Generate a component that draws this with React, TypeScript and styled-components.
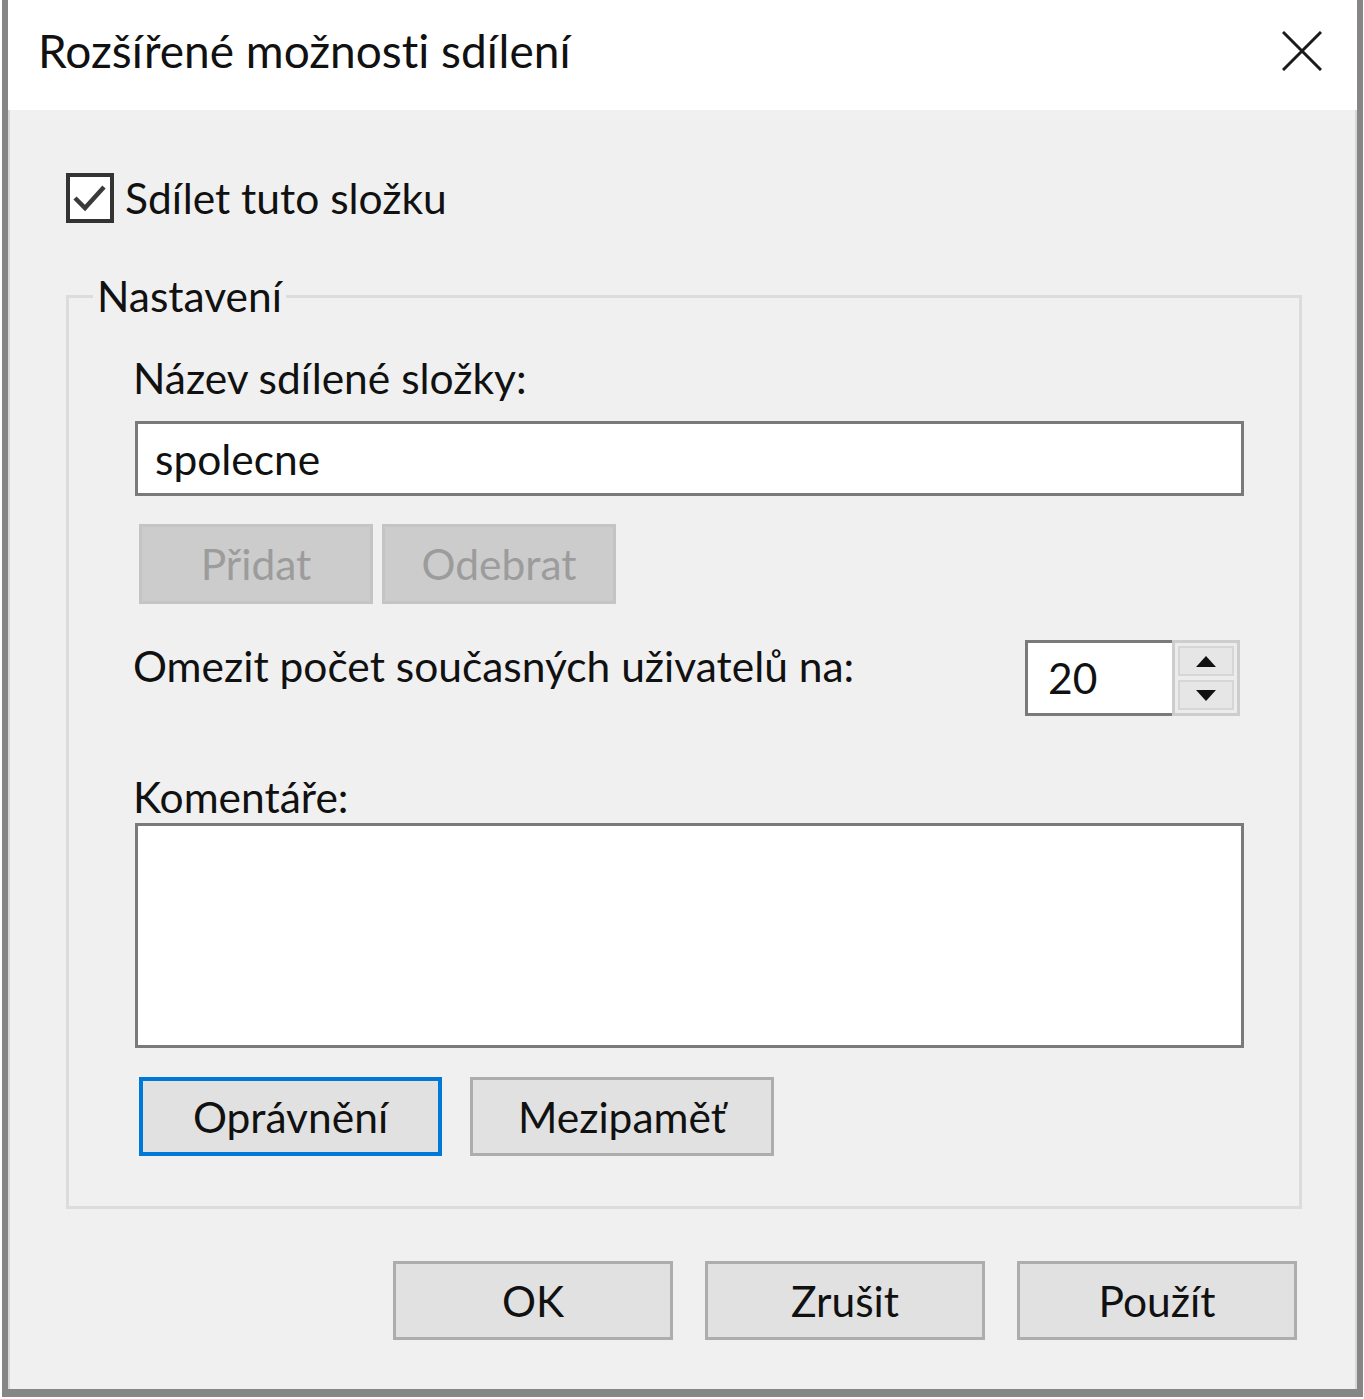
import React from "react";
import styled, { createGlobalStyle } from "styled-components";

const Global = createGlobalStyle`
  html, body { margin: 0; padding: 0; background: #ffffff; }
  body { font-family: Lato, "Noto Sans", sans-serif; color: #111; font-variant-ligatures: none; }
  * { box-sizing: border-box; }
`;

const FONT = `font-family: Lato, "Noto Sans", sans-serif; font-size: 42.5px; line-height: 52px; font-variant-ligatures: none;`;

const Window = styled.div`
  width: 1361px;
  height: 1397px;
  margin-left: 2px;
  border: 6px solid #868686;
  border-top: none;
  border-bottom-width: 8px;
  background: #f0f0f0;
  display: flex;
  flex-direction: column;
  box-shadow: inset 2px 0 0 #d8d8d8, inset -2px 0 0 #d8d8d8;
`;

const TitleBar = styled.div`
  height: 110px;
  flex: none;
  background: #ffffff;
  display: flex;
  align-items: center;
  justify-content: space-between;
  padding: 0 35px 8px 30px;
`;

const Title = styled.div`
  ${FONT}
  font-size: 46px;
  color: #111;
`;

const CloseButton = styled.button`
  width: 40px;
  height: 40px;
  padding: 0;
  border: none;
  background: transparent;
  display: flex;
`;

const Body = styled.div`
  flex: 1;
  display: flex;
  flex-direction: column;
  padding: 0 55px 0 58px;
`;

const CheckRow = styled.label`
  margin-top: 63px;
  height: 50px;
  display: flex;
  align-items: center;
  gap: 11px;
  ${FONT}
`;

const CheckBox = styled.span`
  width: 48px;
  height: 50px;
  border: 4px solid #333;
  background: #fff;
  display: flex;
  align-items: center;
  justify-content: center;
`;

const Group = styled.fieldset`
  margin: 47px 0 0 0;
  padding: 0;
  border: 3px solid #dcdcdc;
  min-width: 0;
`;

const Legend = styled.legend`
  ${FONT}
  margin-left: 24px;
  padding: 0 4px;
`;

const GroupContent = styled.div`
  display: flex;
  flex-direction: column;
  padding: 30px 55px 50px 64px;
`;

const Label = styled.div<{ $top?: number }>`
  ${FONT}
  margin-top: ${(p) => p.$top ?? 0}px;
  white-space: nowrap;
`;

const TextField = styled.div<{ $top?: number; $height: number }>`
  margin: ${(p) => p.$top ?? 0}px 0 0 2px;
  height: ${(p) => p.$height}px;
  border: 3px solid #7a7a7a;
  background: #fff;
  ${FONT}
  display: flex;
  align-items: ${(p) => (p.$height > 100 ? "flex-start" : "center")};
  padding-left: 17px;
`;

const ButtonRow = styled.div<{ $top: number; $gap: number }>`
  margin-top: ${(p) => p.$top}px;
  display: flex;
  gap: ${(p) => p.$gap}px;
  margin-left: 6px;
`;

const Button = styled.button<{ $w: number; $h: number; $disabled?: boolean; $focused?: boolean }>`
  width: ${(p) => p.$w}px;
  height: ${(p) => p.$h}px;
  ${FONT}
  padding: 0;
  background: ${(p) => (p.$disabled ? "#cccccc" : "#e1e1e1")};
  color: ${(p) => (p.$disabled ? "#9c9c9c" : "#111")};
  border: ${(p) =>
    p.$focused ? "4px solid #0078d7" : p.$disabled ? "3px solid #c4c4c4" : "3px solid #adadad"};
  display: flex;
  align-items: center;
  justify-content: center;
`;

const LimitRow = styled.div`
  margin-top: 36px;
  display: flex;
  align-items: flex-start;
  justify-content: space-between;
  padding-right: 4px;
`;

const SpinBox = styled.div`
  width: 215px;
  height: 76px;
  display: flex;
`;

const SpinField = styled.div`
  flex: 1;
  background: #fff;
  border: 3px solid #7a7a7a;
  border-right: none;
  ${FONT}
  display: flex;
  align-items: center;
  padding-left: 20px;
`;

const SpinButtons = styled.div`
  width: 68px;
  border: 3px solid #cdcdcd;
  background: #ececec;
  display: flex;
  flex-direction: column;
  gap: 4px;
  padding: 3px;
`;

const SpinButton = styled.div`
  flex: 1;
  background: #e6e6e6;
  border: 2px solid #d6d6d6;
  display: flex;
  align-items: center;
  justify-content: center;
`;

const Footer = styled.div`
  margin-top: 52px;
  margin-right: 5px;
  display: flex;
  justify-content: flex-end;
  gap: 32px;
`;

export default function App() {
  return (
    <>
      <Global />
      <Window>
        <TitleBar>
          <Title>Rozšířené možnosti sdílení</Title>
          <CloseButton aria-label="Zavřít">
            <svg width="40" height="40" viewBox="0 0 40 40">
              <path d="M1 1 L39 39 M39 1 L1 39" stroke="#1a1a1a" strokeWidth="3" fill="none" />
            </svg>
          </CloseButton>
        </TitleBar>
        <Body>
          <CheckRow>
            <CheckBox>
              <svg width="38" height="38" viewBox="0 0 38 38">
                <path d="M4 19 L14 29 L33 8" stroke="#3a3a3a" strokeWidth="4.5" fill="none" />
              </svg>
            </CheckBox>
            Sdílet tuto složku
          </CheckRow>
          <Group>
            <Legend>Nastavení</Legend>
            <GroupContent>
              <Label>Název sdílené složky:</Label>
              <TextField $top={17} $height={75}>spolecne</TextField>
              <ButtonRow $top={28} $gap={9}>
                <Button $w={234} $h={80} $disabled>Přidat</Button>
                <Button $w={234} $h={80} $disabled>Odebrat</Button>
              </ButtonRow>
              <LimitRow>
                <Label>Omezit počet současných uživatelů na:</Label>
                <SpinBox>
                  <SpinField>20</SpinField>
                  <SpinButtons>
                    <SpinButton>
                      <svg width="22" height="13" viewBox="0 0 22 13">
                        <path d="M11 1 L21 12 L1 12 Z" fill="#111" />
                      </svg>
                    </SpinButton>
                    <SpinButton>
                      <svg width="22" height="13" viewBox="0 0 22 13">
                        <path d="M1 1 L21 1 L11 12 Z" fill="#111" />
                      </svg>
                    </SpinButton>
                  </SpinButtons>
                </SpinBox>
              </LimitRow>
              <Label $top={55}>Komentáře:</Label>
              <TextField $height={225} />
              <ButtonRow $top={29} $gap={28}>
                <Button $w={303} $h={79} $focused>Oprávnění</Button>
                <Button $w={304} $h={79}>Mezipaměť</Button>
              </ButtonRow>
            </GroupContent>
          </Group>
          <Footer>
            <Button $w={280} $h={79}>OK</Button>
            <Button $w={280} $h={79}>Zrušit</Button>
            <Button $w={280} $h={79}>Použít</Button>
          </Footer>
        </Body>
      </Window>
    </>
  );
}
